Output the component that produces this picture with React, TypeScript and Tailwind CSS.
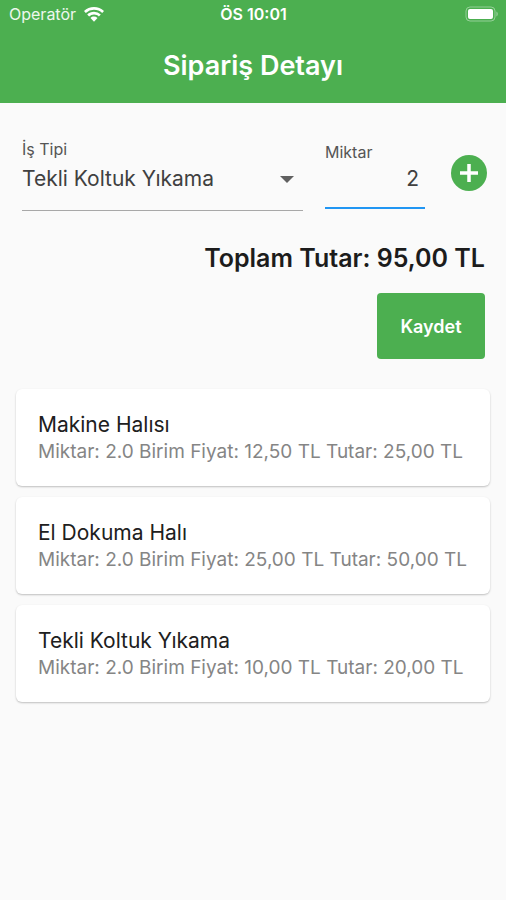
import { useState } from "react";

interface OrderLine {
  name: string;
  quantity: number;
  unitPrice: number;
}

const ORDER_LINES: OrderLine[] = [
  { name: "Makine Halısı", quantity: 2, unitPrice: 12.5 },
  { name: "El Dokuma Halı", quantity: 2, unitPrice: 25 },
  { name: "Tekli Koltuk Yıkama", quantity: 2, unitPrice: 10 },
];

function formatPrice(value: number): string {
  return `${value.toFixed(2).replace(".", ",")} TL`;
}

function StatusBar() {
  return (
    <div className="grid h-7 grid-cols-3 items-center pr-2 pl-[9px] text-[16px] leading-5">
      <div className="flex items-center gap-2 text-white/90">
        Operatör
        <svg viewBox="0 0 20 15" className="h-[15px] w-5 fill-white" aria-hidden="true">
          <path d="M10 0C6.2 0 2.700 1.500 0 3.900l1.800 2A12.200 12.200 0 0 1 10 2.800c3.100 0 6 1.200 8.200 3.100l1.800-2A15 15 0 0 0 10 0Z" />
          <path d="M10 4.800c-2.600 0-5 1-6.800 2.600l1.900 2.100A7.400 7.400 0 0 1 10 7.600c1.900 0 3.600.700 4.900 1.900l1.900-2.100A10.200 10.200 0 0 0 10 4.800Z" />
          <path d="M10 9.500c-1.400 0-2.600.500-3.500 1.400L10 14.800l3.500-3.900A5.200 5.200 0 0 0 10 9.500Z" />
        </svg>
      </div>
      <div className="text-center font-semibold">ÖS 10:01</div>
      <svg viewBox="0 0 33 16" className="h-4 w-[33px] justify-self-end" aria-hidden="true">
        <rect x="1" y="1" width="29" height="14" rx="4" fill="none" stroke="white" strokeOpacity="0.4" />
        <rect x="3" y="3" width="25" height="10" rx="2" fill="white" />
        <path d="M31.500 5.500c1.500.700 1.500 4.300 0 5Z" fill="white" fillOpacity="0.5" />
      </svg>
    </div>
  );
}

function OrderCard({ line }: { line: OrderLine }) {
  return (
    <li className="rounded-md bg-white px-[22px] pt-6 pb-[23px] shadow-[0_1px_2px_rgba(0,0,0,0.24)]">
      <h2 className="text-[21px] leading-6 text-[#202020]">{line.name}</h2>
      <p className="mt-1 text-[19px] leading-[22px] whitespace-nowrap text-[#858585]">
        Miktar: {line.quantity.toFixed(1)} Birim Fiyat: {formatPrice(line.unitPrice)} Tutar:{" "}
        {formatPrice(line.quantity * line.unitPrice)}
      </p>
    </li>
  );
}

export default function App() {
  const [jobType, setJobType] = useState("Tekli Koltuk Yıkama");
  const [quantity, setQuantity] = useState("2");
  const total = ORDER_LINES.reduce((sum, line) => sum + line.quantity * line.unitPrice, 0);

  return (
    <div className="min-h-screen bg-[#fafafa] font-[Inter,'Liberation_Sans',sans-serif]">
      <header className="bg-[#4caf50] text-white">
        <StatusBar />
        <h1 className="pt-[22px] pb-[21px] text-center text-[27px] leading-8 font-semibold">
          Sipariş Detayı
        </h1>
      </header>

      <main className="pb-6">
        <form onSubmit={(event) => event.preventDefault()}>
          <div className="flex items-start gap-[22px] pt-9 pr-4 pl-[22px]">
            <div className="min-w-0 flex-1 border-b border-[#a8a8a8] pb-[15px]">
              <label htmlFor="job-type" className="block text-[16px] leading-5 text-[#555]">
                İş Tipi
              </label>
              <div className="relative mt-1">
                <select
                  id="job-type"
                  value={jobType}
                  onChange={(event) => setJobType(event.target.value)}
                  className="block h-8 w-full appearance-none bg-transparent pr-8 text-[21px] leading-8 text-[#404040] outline-none"
                >
                  {ORDER_LINES.map((line) => (
                    <option key={line.name}>{line.name}</option>
                  ))}
                </select>
                <svg
                  viewBox="0 0 14 7"
                  className="pointer-events-none absolute top-[13px] right-[9px] h-[7px] w-[14px] fill-[#606060]"
                  aria-hidden="true"
                >
                  <path d="M0 0h14L7 7Z" />
                </svg>
              </div>
            </div>
            <div className="w-[100px] border-b-2 border-[#2196f3] pt-[3px]">
              <label htmlFor="quantity" className="block text-[16px] leading-5 text-[#555]">
                Miktar
              </label>
              <input
                id="quantity"
                inputMode="numeric"
                value={quantity}
                onChange={(event) => setQuantity(event.target.value)}
                className="mt-px mb-3 block h-8 w-full bg-transparent pr-[6px] text-right text-[21px] leading-8 text-[#404040] outline-none"
              />
            </div>
            <button type="button" aria-label="Ekle" className="mt-[14px] flex h-10 w-[43px] shrink-0 items-center justify-center">
              <svg viewBox="0 0 40 40" className="h-10 w-10" aria-hidden="true">
                <circle cx="20" cy="20" r="18" fill="#4caf50" />
                <path d="M20 11v18M11 20h18" stroke="white" strokeWidth="3.500" />
              </svg>
            </button>
          </div>

          <div className="flex flex-col items-end px-[21px] pt-[33px]">
            <p className="text-[25px] leading-7 font-semibold text-[#1c1c1c]">
              Toplam Tutar: {formatPrice(total)}
            </p>
            <button
              type="submit"
              className="mt-[21px] h-[66px] w-[108px] rounded bg-[#4caf50] text-[18px] font-semibold text-white"
            >
              Kaydet
            </button>
          </div>
        </form>

        <ul className="mx-4 mt-[30px] flex flex-col gap-[11px]">
          {ORDER_LINES.map((line) => (
            <OrderCard key={line.name} line={line} />
          ))}
        </ul>
      </main>
    </div>
  );
}
